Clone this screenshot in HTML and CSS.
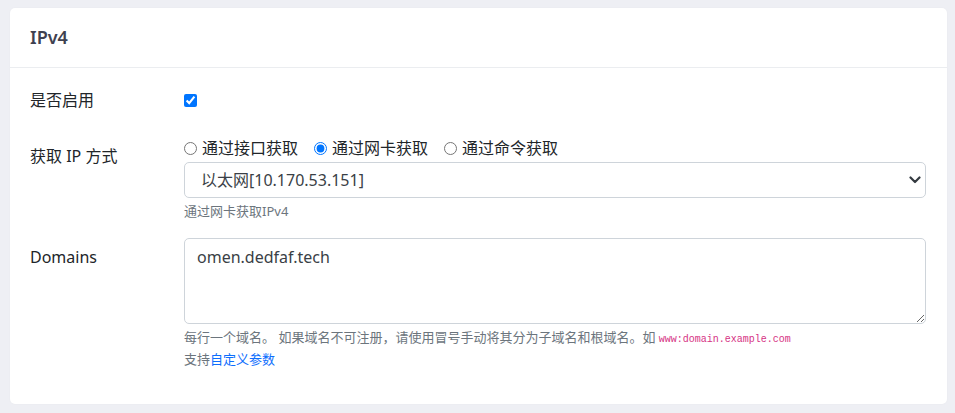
FILE: index.html
```html
<!DOCTYPE html>
<html lang="zh-CN">
<head>
<meta charset="utf-8">
<title>IPv4</title>
<link rel="stylesheet" href="styles.css">
</head>
<body>
<div class="card">
  <div class="card-header">IPv4</div>
  <div class="card-body">
    <div class="row">
      <label class="label">是否启用</label>
      <div class="control check-control">
        <input type="checkbox" class="check" checked>
      </div>
    </div>
    <div class="row">
      <label class="label label-radio">获取 IP 方式</label>
      <div class="control">
        <div class="radios">
          <label class="radio-item"><input type="radio" name="ipmode"><span>通过接口获取</span></label>
          <label class="radio-item"><input type="radio" name="ipmode" checked><span>通过网卡获取</span></label>
          <label class="radio-item"><input type="radio" name="ipmode"><span>通过命令获取</span></label>
        </div>
        <div class="select-wrap">
          <select class="select">
            <option>以太网[10.170.53.151]</option>
          </select>
          <svg class="chevron" width="12" height="8" viewBox="0 0 12 8"><path d="M1.5 1.5 L6 6 L10.5 1.5" fill="none" stroke="#343a40" stroke-width="2.2" stroke-linecap="round" stroke-linejoin="round"/></svg>
        </div>
        <div class="help">通过网卡获取IPv4</div>
      </div>
    </div>
    <div class="row">
      <label class="label">Domains</label>
      <div class="control">
        <textarea class="textarea" rows="3">omen.dedfaf.tech</textarea>
        <div class="help">每行一个域名。 如果域名不可注册，请使用冒号手动将其分为子域名和根域名。如 <code>www:domain.example.com</code></div>
        <div class="help help-tight">支持<a href="#" class="link">自定义参数</a></div>
      </div>
    </div>
  </div>
</div>
</body>
</html>
```

FILE: styles.css
```css
* { box-sizing: border-box; }
html, body { margin: 0; padding: 0; }
body {
  background: #eeeff4;
  font-family: "Noto Sans", "Noto Sans CJK SC", sans-serif;
  font-size: 16px;
  line-height: 24px;
  color: #212529;
  padding: 8px 8px 10px 10px;
}
.card {
  width: 937px;
  background: #fff;
  border-radius: 5px;
  box-shadow: 0 0 2px rgba(0,0,0,0.04);
}
.card-header {
  padding: 16px 20px;
  height: 60px;
  border-bottom: 1px solid #ebedf0;
  font-size: 18px;
  line-height: 27px;
  font-weight: 600;
  color: #3f4150;
}
.card-body {
  padding: 13px 20px 18px 20px;
}
.row {
  display: flex;
  margin-bottom: 17px;
}
.label {
  width: 154px;
  flex: none;
  padding: 7px 0;
  line-height: 24px;
}
.label-radio { padding-top: 8px; }
.control {
  flex: 1;
  min-width: 0;
  margin-right: 1px;
}
.check-control {
  display: flex;
  align-items: center;
}
.check {
  width: 13px;
  height: 13px;
  margin: 0;
}
.radios {
  display: flex;
  height: 24px;
  align-items: center;
}
.radio-item {
  display: flex;
  align-items: center;
  margin-right: 16px;
}
.radio-item input {
  margin: 0 5px 0 0;
  width: 13px;
  height: 13px;
}
.select-wrap {
  position: relative;
  margin-top: 2px;
}
.select {
  display: block;
  width: 100%;
  height: 36px;
  appearance: none;
  -webkit-appearance: none;
  border: 1px solid #ced4da;
  border-radius: 5px;
  background: #fff;
  padding: 0 36px 0 16px;
  font-family: "Noto Sans", "Noto Sans CJK SC", sans-serif;
  font-size: 16px;
  color: #3a3f46;
}
.chevron {
  position: absolute;
  right: 5px;
  top: 14px;
}
.help {
  margin-top: 4px;
  font-size: 13px;
  line-height: 19px;
  color: #6c757d;
}
.help-tight { margin-top: 0; line-height: 20px; }
.textarea {
  display: block;
  width: 100%;
  height: 86px;
  border: 1px solid #ced4da;
  border-radius: 5px;
  padding: 6px 12px;
  font-family: "Noto Sans", "Noto Sans CJK SC", sans-serif;
  font-size: 16px;
  line-height: 24px;
  color: #3a3f46;
  resize: vertical;
}
code {
  font-family: "Liberation Mono", monospace;
  font-size: 10px;
  color: #d63384;
}
.link {
  color: #0d6efd;
  text-decoration: none;
}
```
